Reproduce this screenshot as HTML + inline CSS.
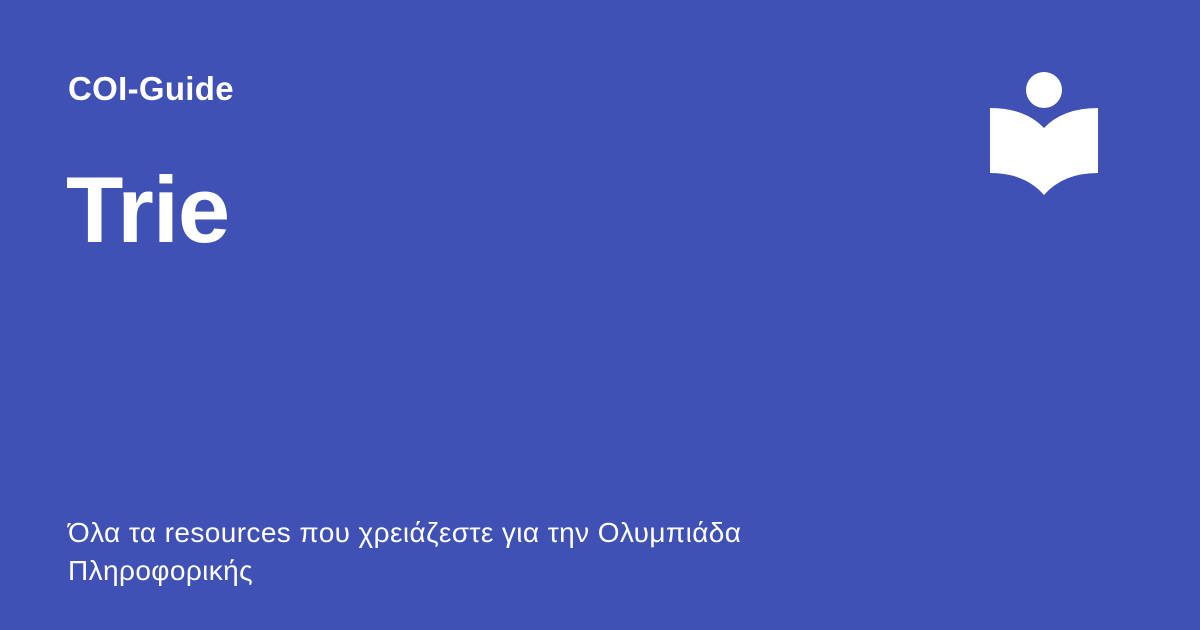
<!DOCTYPE html>
<html><head><style>
body{margin:0;width:1200px;height:630px;background:#3f51b5;position:relative;overflow:hidden;font-family:"Liberation Sans",sans-serif;color:#fff}
.a{position:absolute;left:68px;top:70px;font-size:33px;font-weight:bold;letter-spacing:0.3px}
.b{position:absolute;left:66px;top:158px;font-size:94px;font-weight:bold;line-height:1.1;letter-spacing:-1px}
.c{position:absolute;left:68px;top:514px;font-size:28px;line-height:38px;width:800px;letter-spacing:0.4px}
svg{position:absolute;left:0;top:0}
</style></head><body>
<div class="a">COI-Guide</div>
<div class="b">Trie</div>
<div class="c">Όλα τα resources που χρειάζεστε για την Ολυμπιάδα<br>Πληροφορικής</div>
<svg width="1200" height="630"><circle cx="1044" cy="90" r="18" fill="#fff"/>
<path d="M990 108 Q1025 108 1044 128 Q1063 108 1098 108 L1098 173 Q1063 173 1044 195 Q1025 173 990 173 Z" fill="#fff"/></svg>
</body></html>
